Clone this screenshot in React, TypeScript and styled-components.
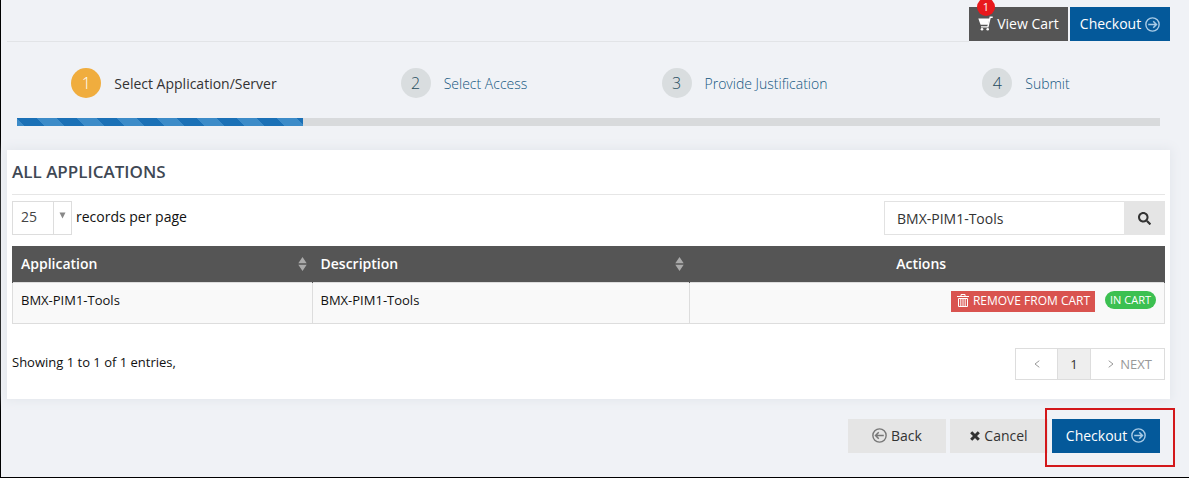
import React from 'react';
import styled, { createGlobalStyle, css } from 'styled-components';
import { FaSearch } from 'react-icons/fa';

const GlobalStyle = createGlobalStyle`
  * { box-sizing: border-box; }
  body {
    margin: 0;
    background: #f0f2f6;
    color: #111;
    font-family: "Open Sans", sans-serif;
    font-size: 13px;
    line-height: 18px;
  }
  button, input, select { font: inherit; color: inherit; margin: 0; border-radius: 0; }
  button { cursor: pointer; }
`;

const Page = styled.div`
  min-height: 100vh;
  padding: 7px 19px 0 6px;
  border-left: 1px solid #000;
  border-bottom: 1px solid #000;
`;

const TopBar = styled.header`
  display: flex;
  justify-content: flex-end;
  gap: 2px;
`;

const TopRule = styled.div`
  flex: 1;
  border-bottom: 1px solid #e2e4e7;
  margin: 0 -2px -1px 0;
`;

type Tone = 'dark' | 'primary' | 'light';

const tones = {
  dark: css`background: #555; color: #fff;`,
  primary: css`background: #04599a; color: #fff;`,
  light: css`background: #e5e5e5; color: #333;`,
};

const Button = styled.button<{ $tone: Tone; $width: number }>`
  ${({ $tone }) => tones[$tone]}
  position: relative;
  display: flex;
  align-items: center;
  justify-content: center;
  gap: 4px;
  width: ${({ $width }) => $width}px;
  height: 34px;
  padding: 0;
  border: 0;
  font-size: 14px;
  white-space: nowrap;
  svg { flex: none; }
`;

const CartCount = styled.span`
  position: absolute;
  top: -9px;
  left: 8px;
  width: 18px;
  height: 18px;
  border-radius: 50%;
  background: #e8191c;
  color: #fff;
  font-size: 11px;
  line-height: 18px;
  text-align: center;
`;

const Wizard = styled.nav`
  padding: 27px 10px 0;
`;

const Steps = styled.ol`
  display: grid;
  grid-template-columns: 314fr 266fr 295fr 268fr;
  margin: 0 0 20px;
  padding: 0;
  list-style: none;
`;

const Step = styled.li`
  display: flex;
  justify-content: center;
`;

const StepLink = styled.a<{ $active: boolean }>`
  display: flex;
  align-items: center;
  gap: 13px;
  color: ${({ $active }) => ($active ? '#333' : '#125680')};
  font-size: 14px;
  font-weight: ${({ $active }) => ($active ? 400 : 300)};
  text-decoration: none;
`;

const StepLabel = styled.span`
  padding-top: 2px;
`;

const StepNumber = styled.span<{ $active: boolean }>`
  width: 30px;
  height: 30px;
  border-radius: 50%;
  background: ${({ $active }) => ($active ? '#f0ad3e' : '#d9dddf')};
  color: ${({ $active }) => ($active ? '#fff' : '#234a5c')};
  font-size: 16px;
  font-weight: 300;
  line-height: 30px;
  text-align: center;
`;

const Track = styled.div`
  height: 8px;
  background: #d8dadc;
`;

const Fill = styled.div`
  height: 8px;
  background-color: #1a70b6;
  background-image: linear-gradient(
    45deg,
    #3c8bc8 25%,
    transparent 25% 50%,
    #3c8bc8 50% 75%,
    transparent 75%
  );
  background-position: 20px 0;
  background-size: 40px 40px;
`;

const Panel = styled.main`
  margin-top: 24px;
  padding: 5px 5px 19px;
  background: #fff;
  box-shadow: 0 0 10px 2px #e4e7ec;
`;

const Title = styled.h1`
  margin: 0 0 6px;
  padding: 6px 0 11px;
  border-bottom: 1px solid #e6e6e6;
  color: #3f4854;
  font-size: 17px;
  font-weight: 600;
  line-height: 22px;
`;

const Controls = styled.div`
  display: flex;
  justify-content: space-between;
  margin-bottom: 11px;
`;

const PageSize = styled.label`
  display: flex;
  gap: 4px;
  font-size: 14px;
  line-height: 32px;
`;

const SelectBox = styled.span`
  display: grid;
  grid-template: 34px / 41px 19px;
`;

const Select = styled.select`
  grid-area: 1 / 1 / 2 / 3;
  appearance: none;
  height: 34px;
  padding: 0 8px 2px;
  border: 1px solid #ddd;
  background: #fff;
  color: #444;
  line-height: 20px;
`;

const SelectArrow = styled.span`
  grid-area: 1 / 2;
  z-index: 1;
  padding: 11px 0 0 5px;
  border-left: 1px solid #ddd;
  pointer-events: none;
  svg { display: block; }
`;

const Search = styled.form`
  display: flex;
  width: 281px;
  height: 34px;
`;

const SearchInput = styled.input`
  flex: 1;
  min-width: 0;
  padding: 2px 12px 0;
  border: 1px solid #e2e2e2;
  border-right: 0;
  background: #fff;
  color: #333;
  font-size: 14px;
  outline: 0;
`;

const SearchButton = styled.button`
  display: flex;
  align-items: center;
  justify-content: center;
  width: 41px;
  padding: 0;
  border: 0;
  background: #e5e5e5;
  color: #333;
`;

const Table = styled.table`
  width: 100%;
  border-collapse: collapse;
  table-layout: fixed;
`;

const Col = styled.col<{ $share: string }>`
  width: ${({ $share }) => $share};
`;

const HeadCell = styled.th<{ $center?: boolean }>`
  height: 36px;
  padding: ${({ $center }) => ($center ? '0 20px 0 8px' : '0 5px 0 8px')};
  border: 1px solid #555;
  border-width: 0 1px;
  background: #555;
  color: #fff;
  font-size: 14px;
  font-weight: 600;
  text-align: ${({ $center }) => ($center ? 'center' : 'left')};
`;

const SortHead = styled.div`
  display: flex;
  align-items: center;
  justify-content: space-between;
`;

const Cell = styled.td`
  height: 41px;
  padding: 8px;
  border: 1px solid #ddd;
  background: #f9f9f9;
  vertical-align: top;
`;

const Actions = styled.div`
  display: flex;
  justify-content: flex-end;
  gap: 10px;
`;

const RemoveButton = styled.button`
  display: flex;
  align-items: center;
  gap: 4px;
  height: 21px;
  padding: 0 5px 0 6px;
  border: 0;
  background: #d9534f;
  color: #fff;
  font-size: 12px;
  white-space: nowrap;
`;

const InCart = styled.span`
  height: 18px;
  padding: 0 5px;
  border-radius: 9px;
  background: #3cc051;
  color: #fff;
  font-size: 11px;
  line-height: 18px;
`;

const Footer = styled.div`
  display: flex;
  align-items: center;
  justify-content: space-between;
  margin-top: 24px;
`;

const Summary = styled.p`
  margin: 0;
  padding-bottom: 4px;
`;

const Pager = styled.div`
  display: flex;
  border: 1px solid #ddd;
`;

const PagerButton = styled.button<{ $current?: boolean; $width: number }>`
  display: flex;
  align-items: center;
  justify-content: center;
  gap: 6px;
  width: ${({ $width }) => $width}px;
  height: 30px;
  padding: 0;
  border: 0;
  background: ${({ $current }) => ($current ? '#eee' : '#fff')};
  color: ${({ $current }) => ($current ? '#333' : '#999')};
  & + & { border-left: 1px solid #ddd; }
`;

const NextButton = styled(PagerButton)`
  padding-left: 5px;
`;

const BottomActions = styled.div`
  display: flex;
  justify-content: flex-end;
  gap: 4px;
  padding: 20px 10px 24px 0;
`;

const Highlight = styled.div`
  position: relative;
  &::after {
    content: '';
    position: absolute;
    inset: -11px -15px -14px -7px;
    border: 2px solid #d3181b;
    pointer-events: none;
  }
`;

const CartIcon = () => (
  <svg width="15" height="16" viewBox="0 0 15 16" fill="#fff" aria-hidden="true">
    <path d="M0.300 2.500H11.600L9.900 8.800H2.600Z" />
    <path d="M14.700 1.200H12.200L9.900 10.900H3" fill="none" stroke="#fff" strokeWidth="1.400" />
    <circle cx="4" cy="13.200" r="1.300" />
    <circle cx="9.700" cy="13.200" r="1.300" />
  </svg>
);

const CircleArrow = ({ flip = false, color }: { flip?: boolean; color: string }) => (
  <svg width="15" height="15" viewBox="0 0 14 14" fill="none" stroke={color} aria-hidden="true">
    <circle cx="7" cy="7" r="6.200" strokeWidth="1.300" />
    <path
      d={flip ? 'M11 7H3.500M6.300 4L3.300 7L6.300 10' : 'M3 7H10.500M7.700 4L10.700 7L7.700 10'}
      strokeWidth="1.400"
    />
  </svg>
);

const CrossIcon = () => (
  <svg width="10" height="10" viewBox="0 0 10 10" stroke="#333" strokeWidth="3" aria-hidden="true">
    <path d="M1.200 1.200L8.800 8.800M8.800 1.200L1.200 8.800" />
  </svg>
);

const TrashIcon = () => (
  <svg width="12" height="14" viewBox="0 0 12 14" fill="none" stroke="#fff" aria-hidden="true">
    <path d="M0 2.500H12M4 2.500V0.500H8V2.500M1.500 4.500H10.500V12.500H1.500ZM3.800 5V12M6 5V12M8.200 5V12" />
  </svg>
);

const SortIcon = () => (
  <svg width="9" height="14" viewBox="0 0 9 14" fill="#aaa" aria-hidden="true">
    <path d="M4.500 0L8.700 6.300H0.300ZM4.500 14L8.700 7.700H0.300Z" />
  </svg>
);

const Chevron = ({ left = false }: { left?: boolean }) => (
  <svg width="6" height="8" viewBox="0 0 6 8" fill="none" stroke="#999" aria-hidden="true">
    <path d={left ? 'M5.300 0.700L1 4L5.300 7.300' : 'M0.700 0.700L5 4L0.700 7.300'} />
  </svg>
);

const steps = ['Select Application/Server', 'Select Access', 'Provide Justification', 'Submit'];

export default function App() {
  const current = 0;
  const progress = ((current + 1) / steps.length) * 100;

  return (
    <>
      <GlobalStyle />
      <Page>
        <TopBar>
          <TopRule />
          <Button type="button" $tone="dark" $width={99}>
            <CartIcon />
            View Cart
            <CartCount>1</CartCount>
          </Button>
          <Button type="button" $tone="primary" $width={100}>
            Checkout
            <CircleArrow color="#a9cbe6" />
          </Button>
        </TopBar>

        <Wizard aria-label="Request steps">
          <Steps>
            {steps.map((label, i) => (
              <Step key={label}>
                <StepLink href="#" $active={i === current}>
                  <StepNumber $active={i === current}>{i + 1}</StepNumber>
                  <StepLabel>{label}</StepLabel>
                </StepLink>
              </Step>
            ))}
          </Steps>
          <Track role="progressbar" aria-label="Progress" aria-valuenow={progress}>
            <Fill style={{ width: `${progress}%` }} />
          </Track>
        </Wizard>

        <Panel>
          <Title>ALL APPLICATIONS</Title>
          <Controls>
            <PageSize>
              <SelectBox>
                <Select defaultValue="25">
                  <option>25</option>
                  <option>50</option>
                </Select>
                <SelectArrow>
                  <svg width="7" height="7" viewBox="0 0 7 7" fill="#888" aria-hidden="true">
                    <path d="M0.500 0.500H6.500L3.500 6.500Z" />
                  </svg>
                </SelectArrow>
              </SelectBox>
              records per page
            </PageSize>
            <Search onSubmit={(e) => e.preventDefault()}>
              <SearchInput aria-label="Search applications" defaultValue="BMX-PIM1-Tools" />
              <SearchButton type="submit" aria-label="Search">
                <FaSearch size={13} />
              </SearchButton>
            </Search>
          </Controls>

          <Table>
            <colgroup>
              <Col $share="26%" />
              <Col $share="32.8%" />
              <Col $share="41.2%" />
            </colgroup>
            <thead>
              <tr>
                {['Application', 'Description'].map((name) => (
                  <HeadCell key={name} scope="col">
                    <SortHead>
                      {name}
                      <SortIcon />
                    </SortHead>
                  </HeadCell>
                ))}
                <HeadCell scope="col" $center>Actions</HeadCell>
              </tr>
            </thead>
            <tbody>
              <tr>
                <Cell>BMX-PIM1-Tools</Cell>
                <Cell>BMX-PIM1-Tools</Cell>
                <Cell>
                  <Actions>
                    <RemoveButton type="button">
                      <TrashIcon />
                      REMOVE FROM CART
                    </RemoveButton>
                    <InCart>IN CART</InCart>
                  </Actions>
                </Cell>
              </tr>
            </tbody>
          </Table>

          <Footer>
            <Summary>Showing 1 to 1 of 1 entries,</Summary>
            <Pager>
              <PagerButton type="button" aria-label="Previous" $width={41}>
                <Chevron left />
              </PagerButton>
              <PagerButton type="button" $current $width={33}>1</PagerButton>
              <NextButton type="button" $width={74}>
                <Chevron />
                NEXT
              </NextButton>
            </Pager>
          </Footer>
        </Panel>

        <BottomActions>
          <Button type="button" $tone="light" $width={98}>
            <CircleArrow flip color="#777" />
            Back
          </Button>
          <Button type="button" $tone="light" $width={98}>
            <CrossIcon />
            Cancel
          </Button>
          <Highlight>
            <Button type="button" $tone="primary" $width={108}>
              Checkout
              <CircleArrow color="#a9cbe6" />
            </Button>
          </Highlight>
        </BottomActions>
      </Page>
    </>
  );
}
